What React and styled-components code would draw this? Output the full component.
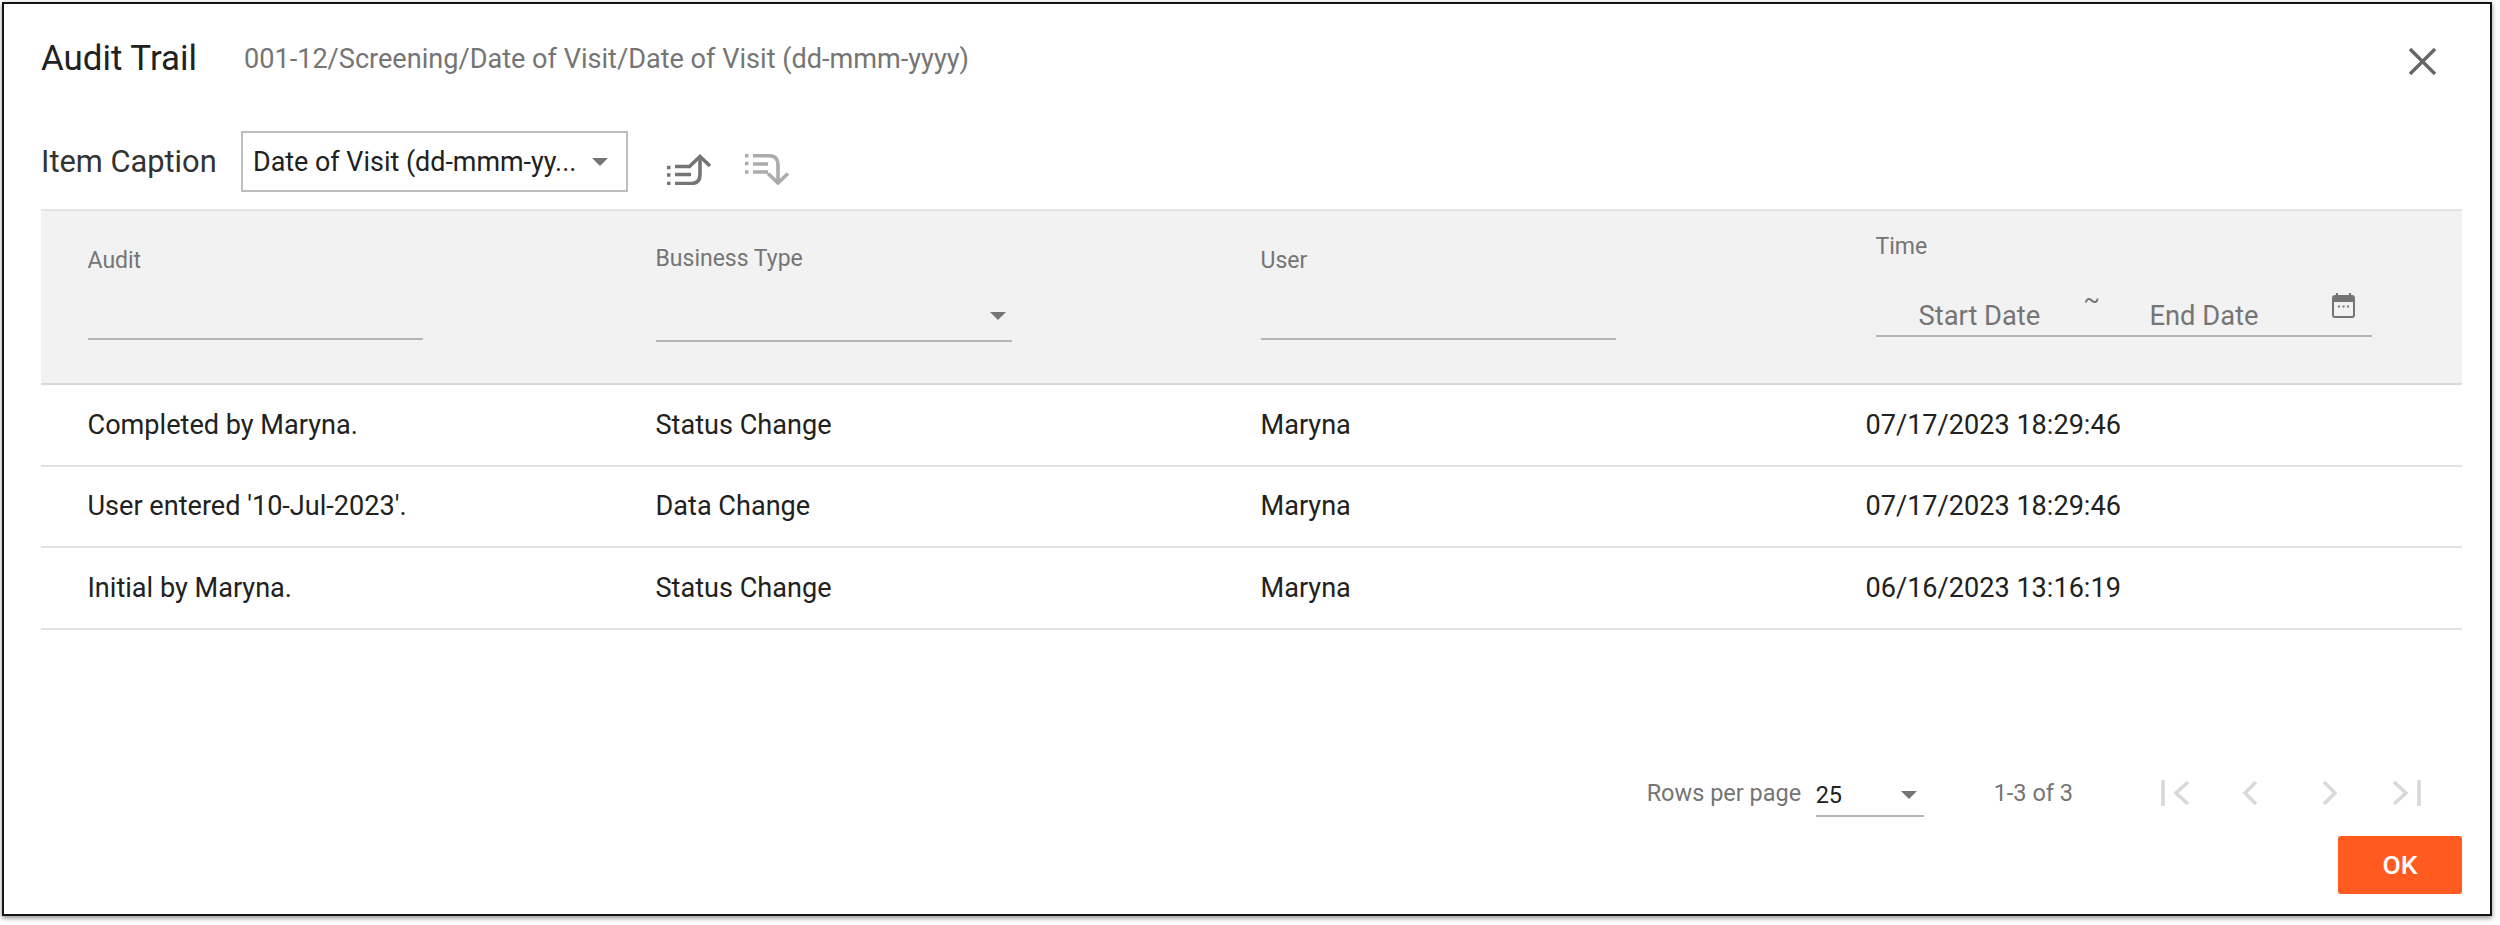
import React from "react";
import styled, { createGlobalStyle } from "styled-components";

const Global = createGlobalStyle`
  html, body { margin: 0; padding: 0; background: #fff; }
  body { font-family: Roboto, "Liberation Sans", sans-serif; }
  * { box-sizing: border-box; }
`;

const Page = styled.div`
  width: 2500px;
  height: 925px;
  padding: 2px 8px 9px 2px;
  background: #fff;
`;

const Dialog = styled.div`
  width: 100%;
  height: 100%;
  border: 2px solid #141414;
  background: #fff;
  box-shadow: 0 2px 5px rgba(0, 0, 0, 0.45);
  padding: 0 28px 0 37px;
  display: flex;
  flex-direction: column;
`;

const TitleBar = styled.header`
  height: 112px;
  flex: none;
  display: flex;
  align-items: center;
  padding-bottom: 3px;
`;

const Title = styled.h1`
  margin: 0;
  font-size: 34.9px;
  line-height: 40px;
  font-weight: 400;
  color: #212121;
  width: 203px;
`;

const Subtitle = styled.span`
  font-size: 27.1px;
  color: #757575;
  flex: 1;
`;

const CloseButton = styled.button`
  border: 0;
  background: none;
  padding: 0;
  margin: 6px 26px 0 0;
  display: flex;
  width: 27px;
  height: 27px;
`;

const Toolbar = styled.div`
  height: 93px;
  flex: none;
  display: flex;
  align-items: flex-start;
  padding-top: 15px;
`;

const CaptionLabel = styled.label`
  font-size: 30.8px;
  line-height: 62px;
  color: #333;
  width: 200px;
`;

const CaptionSelect = styled.div`
  width: 387px;
  height: 61px;
  border: 2px solid #bdbdbd;
  padding: 0 18px 0 10px;
  display: flex;
  align-items: center;
  justify-content: space-between;
  font-size: 26.9px;
  color: #212121;
`;

const Arrow = styled.span`
  display: block;
  width: 0;
  height: 0;
  border-left: 8px solid transparent;
  border-right: 8px solid transparent;
  border-top: 8px solid #757575;
`;

const SortGroup = styled.div`
  display: flex;
  gap: 34px;
  margin-left: 39px;
  padding-top: 23px;
`;

const Columns = styled.div`
  display: grid;
  grid-template-columns: 568px 605px 605px 1fr;
  padding-left: 46.5px;
`;

const FilterBand = styled(Columns)`
  height: 176px;
  flex: none;
  background: #f2f2f2;
  border-top: 2px solid #e4e4e4;
  border-bottom: 2px solid #d9d9d9;
`;

const Filter = styled.div`
  display: flex;
  flex-direction: column;
  padding-top: ${(p) => p.$top}px;
  width: ${(p) => p.$width}px;
  margin-left: ${(p) => p.$left || 0}px;
`;

const FilterLabel = styled.span`
  font-size: 23px;
  line-height: 24px;
  color: #757575;
`;

const FilterLine = styled.div`
  height: ${(p) => p.$height}px;
  border-bottom: 2px solid #b5b5b5;
  display: flex;
  align-items: center;
  justify-content: flex-end;
  padding: ${(p) => p.$arrowTop || 0}px 6px 0 0;
`;

const DateLine = styled.div`
  height: 69px;
  margin-top: 9px;
  border-bottom: 2px solid #b5b5b5;
  position: relative;
  display: flex;
  align-items: flex-end;
  font-size: 27.3px;
  color: #757575;
  padding: 0 0 3px 43px;
`;

const StartDate = styled.span`
  width: 231px;
  line-height: 32px;
`;

const Tilde = styled.span`
  position: absolute;
  left: 208px;
  top: 18px;
  font-size: 24px;
  line-height: 28px;
`;

const EndDate = styled.span`
  flex: 1;
  line-height: 32px;
`;

const CalendarIcon = styled.svg`
  position: absolute;
  left: 456px;
  top: 25px;
  width: 23px;
  height: 26px;
`;

const Row = styled(Columns)`
  height: 81.5px;
  flex: none;
  align-items: center;
  border-bottom: 2px solid #e2e2e2;
  font-size: 27.1px;
  color: #212121;
`;

const Footer = styled.footer`
  flex: 1;
  display: flex;
  flex-direction: column;
  align-items: flex-end;
`;

const Pager = styled.div`
  display: flex;
  align-items: center;
  height: 60px;
  margin-top: 133px;
  margin-right: 41px;
  color: #757575;
  font-size: 23.5px;
`;

const RowsLabel = styled.span`
  width: 169px;
`;

const RowsSelect = styled.div`
  width: 108px;
  height: 41px;
  margin-top: 7px;
  border-bottom: 2px solid #b5b5b5;
  display: flex;
  align-items: center;
  justify-content: space-between;
  padding: 0 7px 0 0;
  font-size: 23.5px;
  color: #212121;
`;

const PageCount = styled.span`
  margin: 0 88px 0 70px;
`;

const PageIcon = styled.svg`
  height: 26px;
  width: ${(p) => p.$w}px;
  margin-left: ${(p) => p.$ml || 0}px;
  fill: none;
  stroke: #d9d9d9;
  stroke-width: 3.6;
`;

const OkButton = styled.button`
  width: 124px;
  height: 58px;
  margin-top: 13px;
  border: 0;
  border-radius: 3px;
  background: #ff5a1f;
  color: #fff;
  font: 500 26.5px Roboto, sans-serif;
`;

const SortUp = () => (
  <svg width="44" height="31" viewBox="0 0 44 31" fill="none" stroke="#757575" strokeWidth="3.6">
    <path d="M0 13.500h3.500M0 21h3.500M0 29.500h3.500M8 12.500h16M8 20.500h16M8 29.500h16q9 0 9-9V3" />
    <path d="M23 12L33 2.500 43 12" />
  </svg>
);

const SortDown = () => (
  <svg width="45" height="31" viewBox="0 0 45 31" fill="none" stroke="#ababab" strokeWidth="3.6">
    <path d="M0 1.700h3.500M0 9.500h3.500M0 18h3.500M8 10h15M8 18h15M8 1.700h16q9 0 9 9V28" />
    <path d="M23 19.500L33 29 43 19.500" />
  </svg>
);

const rows = [
  ["Completed by Maryna.", "Status Change", "Maryna", "07/17/2023 18:29:46"],
  ["User entered '10-Jul-2023'.", "Data Change", "Maryna", "07/17/2023 18:29:46"],
  ["Initial by Maryna.", "Status Change", "Maryna", "06/16/2023 13:16:19"],
];

export default function App() {
  return (
    <Page>
      <Global />
      <Dialog>
        <TitleBar>
          <Title>Audit Trail</Title>
          <Subtitle>001-12/Screening/Date of Visit/Date of Visit (dd-mmm-yyyy)</Subtitle>
          <CloseButton aria-label="Close">
            <svg width="27" height="27" viewBox="0 0 27 27" stroke="#666" strokeWidth="3.4" fill="none">
              <path d="M1 1l25 25M26 1L1 26" />
            </svg>
          </CloseButton>
        </TitleBar>
        <Toolbar>
          <CaptionLabel>Item Caption</CaptionLabel>
          <CaptionSelect>
            Date of Visit (dd-mmm-yy...
            <Arrow />
          </CaptionSelect>
          <SortGroup>
            <SortUp />
            <SortDown />
          </SortGroup>
        </Toolbar>
        <FilterBand>
          <Filter $top={38} $width={335}>
            <FilterLabel>Audit</FilterLabel>
            <FilterLine $height={67} />
          </Filter>
          <Filter $top={36} $width={356}>
            <FilterLabel>Business Type</FilterLabel>
            <FilterLine $height={71} $arrowTop={21}>
              <Arrow />
            </FilterLine>
          </Filter>
          <Filter $top={38} $width={355}>
            <FilterLabel>User</FilterLabel>
            <FilterLine $height={67} />
          </Filter>
          <Filter $top={24} $width={496} $left={10}>
            <FilterLabel>Time</FilterLabel>
            <DateLine>
              <StartDate>Start Date</StartDate>
              <Tilde>~</Tilde>
              <EndDate>End Date</EndDate>
              <CalendarIcon viewBox="0 0 23 26">
                <path d="M5 0v3M18 0v3" stroke="#757575" strokeWidth="2" />
                <rect x="1" y="3" width="21" height="21" rx="2" fill="none" stroke="#757575" strokeWidth="2" />
                <rect x="1" y="3" width="21" height="6" fill="#757575" />
                <path d="M6 13.500h2M10.500 13.500h2M15 13.500h2" stroke="#757575" strokeWidth="2" />
              </CalendarIcon>
            </DateLine>
          </Filter>
        </FilterBand>
        {rows.map((r, i) => (
          <Row key={i}>
            {r.map((c, j) => (
              <span key={j}>{c}</span>
            ))}
          </Row>
        ))}
        <Footer>
          <Pager>
            <RowsLabel>Rows per page</RowsLabel>
            <RowsSelect>
              25
              <Arrow />
            </RowsSelect>
            <PageCount>1-3 of 3</PageCount>
            <PageIcon $w={29} viewBox="0 0 29 26">
              <path d="M2 0v26M27 2L15 13l12 11" />
            </PageIcon>
            <PageIcon $w={15} $ml={53} viewBox="0 0 15 26">
              <path d="M13 2L2 13l11 11" />
            </PageIcon>
            <PageIcon $w={15} $ml={64} viewBox="0 0 15 26">
              <path d="M2 2l11 11L2 24" />
            </PageIcon>
            <PageIcon $w={29} $ml={55} viewBox="0 0 29 26">
              <path d="M2 2l12 11L2 24M27 0v26" />
            </PageIcon>
          </Pager>
          <OkButton>OK</OkButton>
        </Footer>
      </Dialog>
    </Page>
  );
}
